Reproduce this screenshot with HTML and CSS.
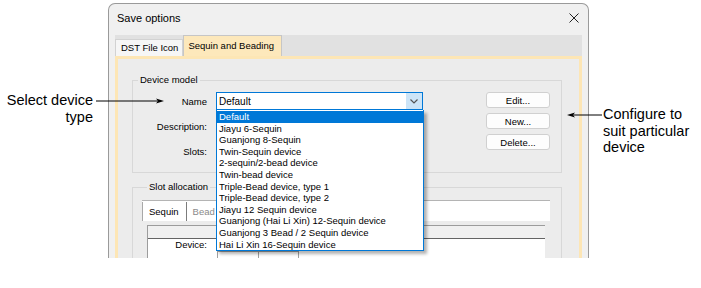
FILE: index.html
```html
<!DOCTYPE html>
<html lang="en">
<head>
    <meta charset="UTF-8">
    <title>Save options</title>
    <link rel="stylesheet" href="styles.css">
</head>
<body>
<div class="page">

    <!-- the dialog -->
    <div class="dialog">
        <div class="titlebar">
            <span>Save options</span>
            <svg class="close" width="10" height="10" viewBox="0 0 10 10">
                <path d="M0.5 0.5 L9.5 9.5 M9.5 0.5 L0.5 9.5" stroke="#222" stroke-width="1" fill="none"/>
            </svg>
        </div>

        <div class="tabs">
            <div class="tab">DST File Icon</div>
            <div class="tab active">Sequin and Beading</div>
        </div>

        <div class="panel">
            <fieldset class="group model">
                <legend>Device model</legend>
                <div class="model-body">
                    <div class="fields">
                        <div class="row">
                            <label>Name</label>
                            <div class="combo">
                                <span>Default</span>
                                <span class="drop">
                                    <svg width="8" height="5" viewBox="0 0 8 5">
                                        <path d="M0.5 0.5 L4 4 L7.5 0.5" stroke="#555" stroke-width="1.2" fill="none"/>
                                    </svg>
                                </span>
                            </div>
                        </div>
                        <div class="row">
                            <label>Description:</label>
                            <div class="textbox"></div>
                        </div>
                        <div class="row">
                            <label>Slots:</label>
                            <div class="textbox short"></div>
                        </div>
                    </div>
                    <div class="buttons">
                        <button>Edit...</button>
                        <button>New...</button>
                        <button>Delete...</button>
                    </div>
                </div>
            </fieldset>

            <fieldset class="group slots">
                <legend>Slot allocation</legend>
                <div class="subtabs">
                    <div class="subtab active">Sequin</div>
                    <div class="subtab">Bead</div>
                </div>
                <div class="subpanel">
                    <div class="subband"></div>
                    <div class="subrow">
                        <label>Device:</label>
                        <div class="slotbox"><span></span></div>
                    </div>
                </div>
            </fieldset>
        </div>
    </div>

    <!-- open dropdown of the Name combo -->
    <ul class="droplist">
        <li class="selected">Default</li>
        <li>Jiayu 6-Sequin</li>
        <li>Guanjong 8-Sequin</li>
        <li>Twin-Sequin device</li>
        <li>2-sequin/2-bead device</li>
        <li>Twin-bead device</li>
        <li>Triple-Bead device, type 1</li>
        <li>Triple-Bead device, type 2</li>
        <li>Jiayu 12 Sequin device</li>
        <li>Guanjong (Hai Li Xin) 12-Sequin device</li>
        <li>Guanjong 3 Bead / 2 Sequin device</li>
        <li>Hai Li Xin 16-Sequin device</li>
    </ul>

    <!-- callouts -->
    <div class="callout left-note">Select device<br>type</div>
    <svg class="pointer left-pointer" width="70" height="8" viewBox="0 0 70 8">
        <path d="M0 4 L64 4" stroke="#000" stroke-width="1"/>
        <path d="M68 4 L60 1.5 L62 4 L60 6.5 Z" fill="#000"/>
    </svg>

    <div class="callout right-note">Configure to<br>suit particular<br>device</div>
    <svg class="pointer right-pointer" width="36" height="8" viewBox="0 0 36 8">
        <path d="M5 4 L36 4" stroke="#000" stroke-width="1"/>
        <path d="M1 4 L9 1.5 L7 4 L9 6.5 Z" fill="#000"/>
    </svg>

</div>
</body>
</html>
```

FILE: styles.css
```css
body {
    margin: 0;
    background: #fff;
    font-family: "Liberation Sans", Arial, sans-serif;
}

.page {
    position: relative;
    width: 701px;
    height: 288px;
    overflow: hidden;
    background: #fff;
}

/* dialog frame */
.dialog {
    box-sizing: border-box;
    width: 481px;
    height: 255px;
    margin: 3px 0 0 108px;
    border: 1px solid #9a9a9a;
    border-bottom: none;
    border-radius: 7px 7px 0 0;
    background: #f0f0f0;
    overflow: hidden;
}

.titlebar {
    height: 27px;
    display: flex;
    align-items: center;
    justify-content: space-between;
    padding: 0 9px 0 8px;
    font-size: 11px;
    color: #000;
}

.close {
    display: block;
}

/* top tabs */
.tabs {
    display: flex;
    align-items: flex-end;
    height: 21px;
    margin: 4px 6px 0;
    background: #e1e1e1;
}

.tab {
    box-sizing: border-box;
    height: 17px;
    padding: 0 4px 0 5px;
    border: 1px solid #d2d2d2;
    border-bottom: none;
    background: #f6f6f6;
    font-size: 9.5px;
    line-height: 16px;
    color: #000;
}

.tab.active {
    height: 21px;
    padding: 0 7px 0 4px;
    border-color: #c6c6c6;
    background: #fde8bb;
    line-height: 20px;
}

/* page of the active tab */
.panel {
    box-sizing: border-box;
    height: 210px;
    margin: 0 6px;
    padding: 15px 17px 0 14px;
    border: 3px solid #fde6b5;
    border-bottom: none;
    background: #ececec;
    font-size: 9.5px;
}

.group {
    margin: 0;
    padding: 0;
    border: 1px solid #d8d8d8;
    min-width: 0;
}

.group legend {
    margin-left: 5px;
    padding: 0 2px;
    line-height: 12px;
    color: #000;
}

/* device model box */
.model-body {
    display: flex;
    justify-content: space-between;
    padding: 6px 11px 12px 0;
}

.fields {
    display: flex;
    flex-direction: column;
    gap: 7px;
}

.row {
    display: flex;
    align-items: center;
    height: 18px;
}

.row label {
    width: 74px;
    margin-right: 9px;
    text-align: right;
}

.combo {
    box-sizing: border-box;
    width: 207px;
    height: 18px;
    display: flex;
    align-items: center;
    justify-content: space-between;
    padding-left: 2px;
    border: 1px solid #0078d7;
    background: #fff;
    font-size: 10px;
}

.combo .drop {
    width: 16px;
    height: 16px;
    display: flex;
    align-items: center;
    justify-content: center;
    background: #cce4f7;
}

.textbox {
    box-sizing: border-box;
    width: 207px;
    height: 18px;
    border: 1px solid #7a7a7a;
    background: #fff;
}

.textbox.short {
    width: 120px;
}

.buttons {
    display: flex;
    flex-direction: column;
    gap: 5px;
}

.buttons button {
    box-sizing: border-box;
    width: 64px;
    height: 16px;
    padding: 0;
    border: 1px solid #d0d0d0;
    border-radius: 3px;
    background: #fdfdfd;
    font-family: "Liberation Sans", Arial, sans-serif;
    font-size: 9.5px;
    color: #000;
}

/* slot allocation box */
.slots {
    margin-top: 8px;
    height: 80px;
    padding: 7px 11px 0 9px;
    box-sizing: border-box;
}

.subtabs {
    display: flex;
    align-items: flex-end;
    height: 21px;
    box-sizing: border-box;
    border-top: 1px solid #b4b4b4;
    background: #fff;
}

.subtab {
    height: 19px;
    padding: 0 7px 0 6px;
    line-height: 19px;
    color: #8a8a8a;
}

.subtab.active {
    box-sizing: border-box;
    border-left: 1px solid #a8a8a8;
    border-right: 1px solid #7c7c7c;
    color: #000;
}

.subpanel {
    margin: 4px 5px 0;
    height: 40px;
    border-top: 1px solid #9c9c9c;
    border-left: 1px solid #9c9c9c;
    background: #fff;
}

.subband {
    height: 12px;
    border-bottom: 1px solid #646464;
    background: #f0f0f0;
}

.subrow {
    display: flex;
    align-items: flex-start;
}

.subrow label {
    width: 59px;
    margin-right: 10px;
    line-height: 12px;
    text-align: right;
}

.slotbox {
    display: flex;
    width: 80px;
    height: 10px;
    margin-top: 12px;
    border: 1px solid #a0a0a0;
    border-bottom: none;
}

.slotbox span {
    width: 40px;
    border-right: 1px solid #a0a0a0;
}

/* dropdown list, lies over the dialog */
.droplist {
    position: absolute;
    left: 216px;
    top: 110px;
    box-sizing: border-box;
    width: 208px;
    margin: 0;
    padding: 1px 0 0;
    list-style: none;
    border: 1px solid #0078d7;
    border-top: none;
    background: #fff;
    box-shadow: 3px 3px 3px rgba(0, 0, 0, 0.3);
    font-size: 9.5px;
    color: #000;
}

.droplist li {
    height: 11.6px;
    line-height: 11.6px;
    padding-left: 2px;
    white-space: nowrap;
}

.droplist li.selected {
    background: #0078d7;
    color: #fff;
}

/* annotation callouts */
.callout {
    position: absolute;
    font-size: 14.5px;
    color: #000;
}

.left-note {
    left: 0;
    top: 92px;
    width: 93px;
    line-height: 17px;
    text-align: right;
}

.right-note {
    left: 603px;
    top: 106px;
    line-height: 16.5px;
}

.pointer {
    position: absolute;
    display: block;
}

.left-pointer {
    left: 96px;
    top: 97px;
}

.right-pointer {
    left: 566px;
    top: 111px;
}
```
